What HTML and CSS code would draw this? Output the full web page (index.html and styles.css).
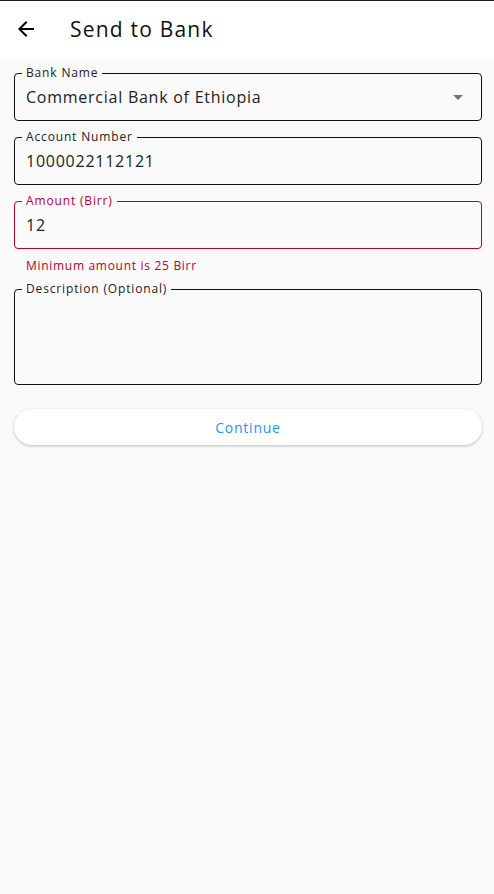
FILE: index.html
```html
<!DOCTYPE html>
<html lang="en">
<head>
<meta charset="utf-8">
<title>Send to Bank</title>
<link rel="stylesheet" href="styles.css">
</head>
<body>
  <header class="appbar">
    <button class="back" aria-label="Back">
      <svg width="24" height="24" viewBox="0 0 24 24"><path d="M20 11H7.83l5.59-5.59L12 4l-8 8 8 8 1.41-1.41L7.83 13H20v-2z" fill="#000"/></svg>
    </button>
    <h1 class="title">Send to Bank</h1>
  </header>
  <main class="content">
    <fieldset class="field">
      <legend class="label">Bank Name</legend>
      <div class="row">
        <span class="value">Commercial Bank of Ethiopia</span>
        <svg class="drop" width="24" height="24" viewBox="0 0 24 24"><path d="M7 10l5 5 5-5z" fill="#757575"/></svg>
      </div>
    </fieldset>
    <fieldset class="field">
      <legend class="label">Account Number</legend>
      <div class="row"><span class="value">1000022112121</span></div>
    </fieldset>
    <fieldset class="field error">
      <legend class="label">Amount (Birr)</legend>
      <div class="row"><span class="value">12</span></div>
    </fieldset>
    <p class="helper">Minimum amount is 25 Birr</p>
    <fieldset class="field desc">
      <legend class="label">Description (Optional)</legend>
      <div class="row"></div>
    </fieldset>
    <button class="continue">Continue</button>
  </main>
</body>
</html>
```
FILE: styles.css
```css
* { box-sizing: border-box; }
html, body { margin: 0; padding: 0; }
body {
  background: #fafafa;
  font-family: "Open Sans", "Noto Sans", sans-serif;
  color: #1f1f1f;
  width: 494px;
  min-height: 894px;
}
.appbar {
  height: 57px;
  border-top: 1px solid #1a1a1a;
  background: #fff;
  display: flex;
  align-items: center;
  padding-left: 14px;
}
.back {
  width: 24px;
  height: 24px;
  padding: 0;
  border: 0;
  background: none;
  display: flex;
}
.title {
  margin: 0 0 0 32px;
  font-size: 21px;
  font-weight: 400;
  color: #111;
  letter-spacing: 1.2px;
}
.content {
  padding: 8px 12px 0 14px;
  display: flex;
  flex-direction: column;
}
.field {
  margin: 0 0 8px 0;
  padding: 0 11px;
  border: 1px solid #111;
  border-radius: 4px;
  min-width: 0;
}
.label {
  margin-left: -4px;
  padding: 0 4px;
  font-size: 12px;
  line-height: 16px;
  color: #222;
  letter-spacing: 0.85px;
}
.row {
  height: 39px;
  display: flex;
  align-items: center;
  justify-content: space-between;
  padding-bottom: 7px;
}
.value {
  font-size: 16px;
  line-height: 24px;
  color: #222;
  letter-spacing: 0.75px;
}
.error { border-color: #b3002d; }
.error .label { color: #b3002d; }
.helper {
  margin: 1px 0 7px 12px;
  font-size: 12px;
  line-height: 16px;
  color: #b3002d;
  letter-spacing: 0.7px;
}
.desc .row { height: 87px; }
.continue {
  margin-top: 16px;
  height: 36px;
  border: 0;
  border-radius: 18px;
  background: #fff;
  box-shadow: 0 1px 3px rgba(0,0,0,0.25);
  color: #2196f3;
  font-family: inherit;
  font-size: 14px;
  font-weight: 500;
  letter-spacing: 0.75px;
}
```
